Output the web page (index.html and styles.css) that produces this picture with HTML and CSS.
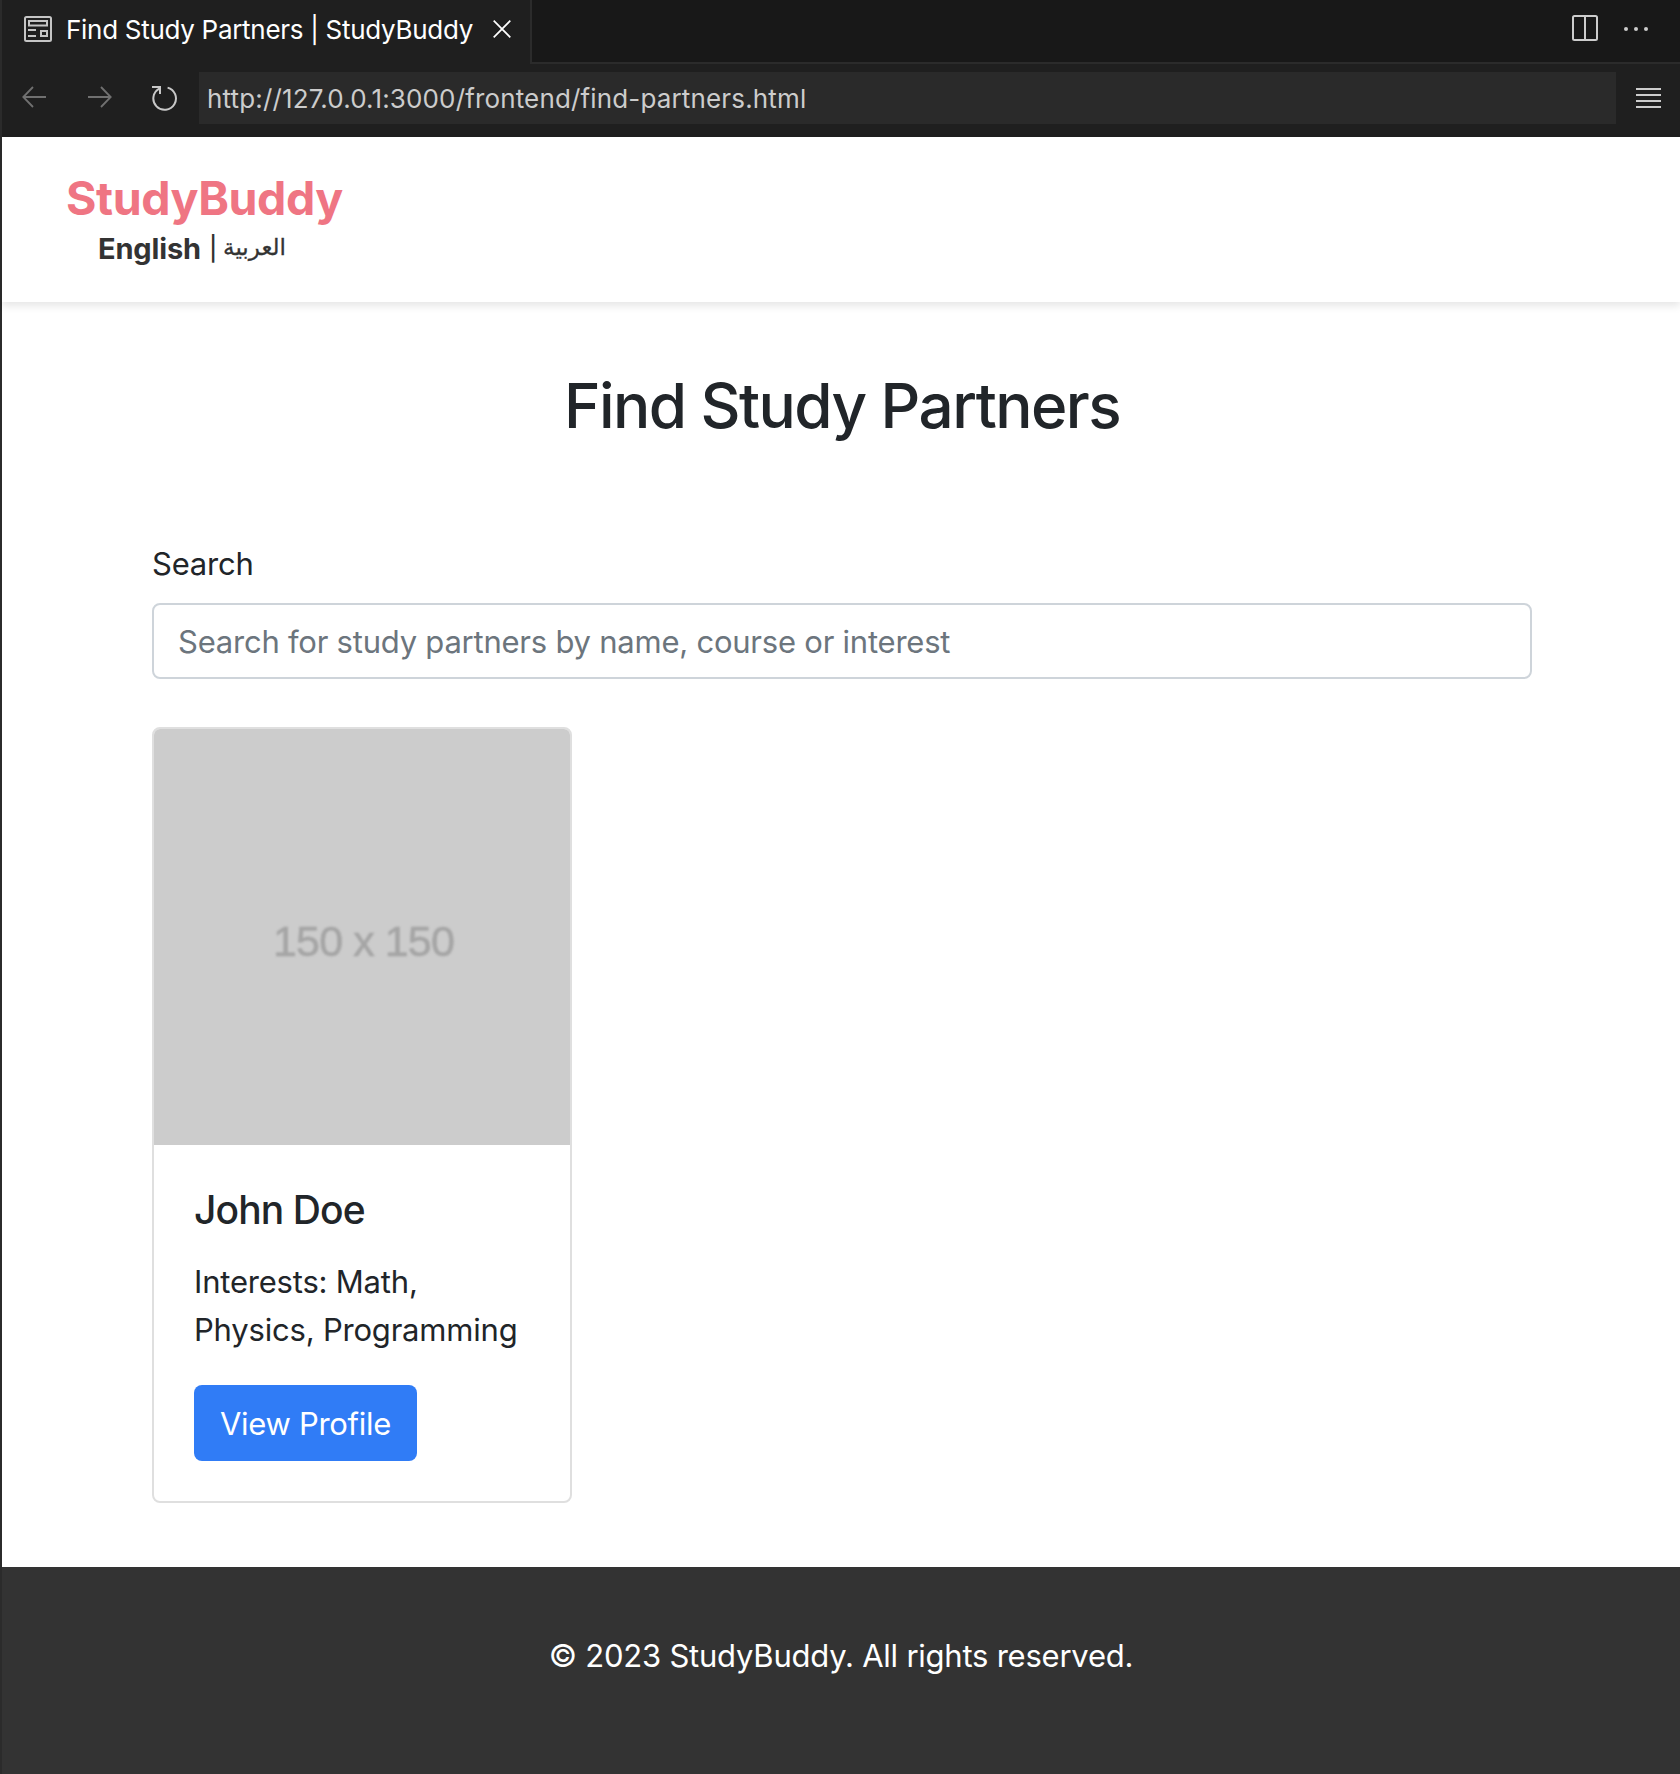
FILE: index.html
```html
<!DOCTYPE html>
<html lang="en">
<head>
<meta charset="utf-8">
<title>Find Study Partners | StudyBuddy</title>
<link rel="stylesheet" href="styles.css">
</head>
<body>
<div class="window">
  <div class="tabs">
    <div class="tab">
      <svg width="28" height="26" viewBox="0 0 28 26" fill="none" stroke="#c5c5c5" stroke-width="2"><rect x="1" y="1" width="26" height="24" rx="1.5"/><rect x="5" y="5" width="18" height="4.5"/><path d="M4 14h8M4 20h8"/><rect x="17" y="15" width="6" height="5"/></svg>
      <span class="tab-title">Find Study Partners | StudyBuddy</span>
      <svg width="18" height="18" viewBox="0 0 18 18" fill="none" stroke="#fff" stroke-width="1.7"><path d="M.7.7l16.6 16.6M17.3.7L.7 17.3"/></svg>
    </div>
    <div class="tab-actions">
      <svg width="26" height="26" viewBox="0 0 26 26" fill="none" stroke="#ccc" stroke-width="2"><rect x="1" y="1" width="24" height="24" rx="1.5"/><path d="M13 1v24"/></svg>
      <svg class="dots" width="26" height="6" viewBox="0 0 26 6" fill="#ccc"><circle cx="3" cy="3" r="2"/><circle cx="13" cy="3" r="2"/><circle cx="23" cy="3" r="2"/></svg>
    </div>
  </div>
  <div class="toolbar">
    <svg class="arrow" width="24" height="22" viewBox="0 0 24 22" fill="none" stroke="#707070" stroke-width="1.8"><path d="M24 11H1.5M11 1L1.3 11l9.7 10"/></svg>
    <svg class="arrow" width="24" height="22" viewBox="0 0 24 22" fill="none" stroke="#707070" stroke-width="1.8"><path d="M0 11h22.5M13 1l9.7 10L13 21"/></svg>
    <svg class="reload" width="26" height="26" viewBox="0 0 26 26" fill="none" stroke="#c8c8c8" stroke-width="2"><path d="M0 2h8v7"/><path d="M7.2 3.6A11.3 11.3 0 1 0 15.6 2.6"/></svg>
    <div class="address">http://127.0.0.1:3000/frontend/find-partners.html</div>
    <svg width="25" height="20" viewBox="0 0 25 20" fill="#ccc"><path d="M0 0h25v2H0zM0 6h25v2H0zM0 12h25v2H0zM0 18h25v2H0z"/></svg>
  </div>
  <header class="site-header">
    <div class="brand">StudyBuddy</div>
    <div class="languages"><b class="english">English</b><span class="bar">|</span><span class="arabic" lang="ar" dir="rtl">العربية</span></div>
  </header>
  <main class="content">
    <h1>Find Study Partners</h1>
    <label class="field-label" for="search">Search</label>
    <input class="search" id="search" type="text" placeholder="Search for study partners by name, course or interest">
    <article class="card">
      <div class="photo"><span class="photo-text">150 x 150</span></div>
      <div class="card-body">
        <h2>John Doe</h2>
        <p>Interests: Math, Physics, Programming</p>
        <a class="button">View Profile</a>
      </div>
    </article>
  </main>
  <footer>© 2023 StudyBuddy. All rights reserved.</footer>
</div>
</body>
</html>
```
FILE: styles.css
```css
* { box-sizing: border-box; }
body { margin: 0; background: #fff; color: #212529; font-family: Inter, "Noto Sans", sans-serif; font-size: 31px; font-weight: 430; line-height: 48px; letter-spacing: -0.2px; }
.window { height: 1774px; display: flex; flex-direction: column; border-left: 2px solid #2b2b2b; }
svg { display: block; flex: none; }

.tabs { height: 64px; flex: none; display: flex; background: #1f1f1f; }
.tab { width: 530px; display: flex; align-items: center; padding: 0 19px 6px 22px; border-right: 2px solid #2b2b2b; color: #fff; font-size: 26px; white-space: nowrap; }
.tab-title { margin: 2px 0 0 14px; flex: 1; letter-spacing: -0.29px; }
.tab-actions { flex: 1; display: flex; align-items: center; justify-content: flex-end; gap: 25px; padding: 0 31px 6px 0; background: #181818; border-bottom: 2px solid #2b2b2b; }
.dots { margin-top: 2px; }

.toolbar { height: 73px; flex: none; display: flex; align-items: center; padding: 0 19px 5px 20px; background: #1f1f1f; }
.toolbar .arrow { margin-top: -2px; }
.toolbar .arrow + .arrow { margin-left: 42px; }
.toolbar .reload { margin-left: 40px; }
.address { flex: 1; height: 52px; margin: 0 20px 0 21px; padding: 1px 0 0 8px; background: #2a2a2a; color: #ccc; font-size: 26px; line-height: 52px; letter-spacing: 0.15px; white-space: nowrap; }

.site-header { height: 165px; flex: none; padding: 32px 64px; box-shadow: 0 4px 8px rgba(0, 0, 0, .1); }
.brand { color: #ef7583; font-size: 46.5px; font-weight: 740; line-height: 58px; letter-spacing: -0.42px; }
.languages { display: flex; padding-left: 32px; color: #333; font-size: 29px; line-height: 44px; }
.english { letter-spacing: -0.15px; }
.bar { margin: 0 6px 0 8px; font-size: 24px; font-weight: 550; }
.arabic { margin-top: -2px; font-family: "DejaVu Sans", sans-serif; font-size: 23px; font-weight: 400; letter-spacing: 0; -webkit-text-stroke: .3px #333; }

.content { flex: 1; padding: 0 148px 0 150px; }
h1 { margin: 65px 0 96px; text-align: center; font-size: 62px; font-weight: 550; line-height: 77px; letter-spacing: -1.55px; }
.field-label { display: block; height: 63px; }
.search { display: block; width: 100%; height: 76px; padding: 12px 24px; border: 2px solid #ced4da; border-radius: 8px; background: #fff; font: inherit; letter-spacing: -0.23px; }
.search::placeholder { color: #6c757d; opacity: 1; }
.card { width: 420px; height: 776px; margin-top: 48px; border: 2px solid #dfdfdf; border-radius: 8px; }
.photo { height: 416px; display: flex; align-items: center; justify-content: center; padding: 8px 0 0 3px; border-radius: 6px 6px 0 0; background: #ccc; color: #a5a5a5; font: 43px "Liberation Sans", sans-serif; letter-spacing: -0.9px; }
.photo-text { -webkit-text-stroke: .6px #a5a5a5; filter: blur(.8px); }
.card-body { padding: 41px 40px 40px; }
h2 { margin: 0 0 24px; font-size: 39px; font-weight: 550; line-height: 48px; letter-spacing: -0.9px; }
p { margin: 0 0 31px; }
.button { display: block; height: 76px; width: 223px; padding: 15px 0 13px; text-align: center; border-radius: 8px; background: #307cf6; color: #fff; letter-spacing: -0.3px; }
footer { height: 207px; flex: none; padding-top: 65px; text-align: center; background: #333; color: #fff; letter-spacing: -0.23px; }
```
